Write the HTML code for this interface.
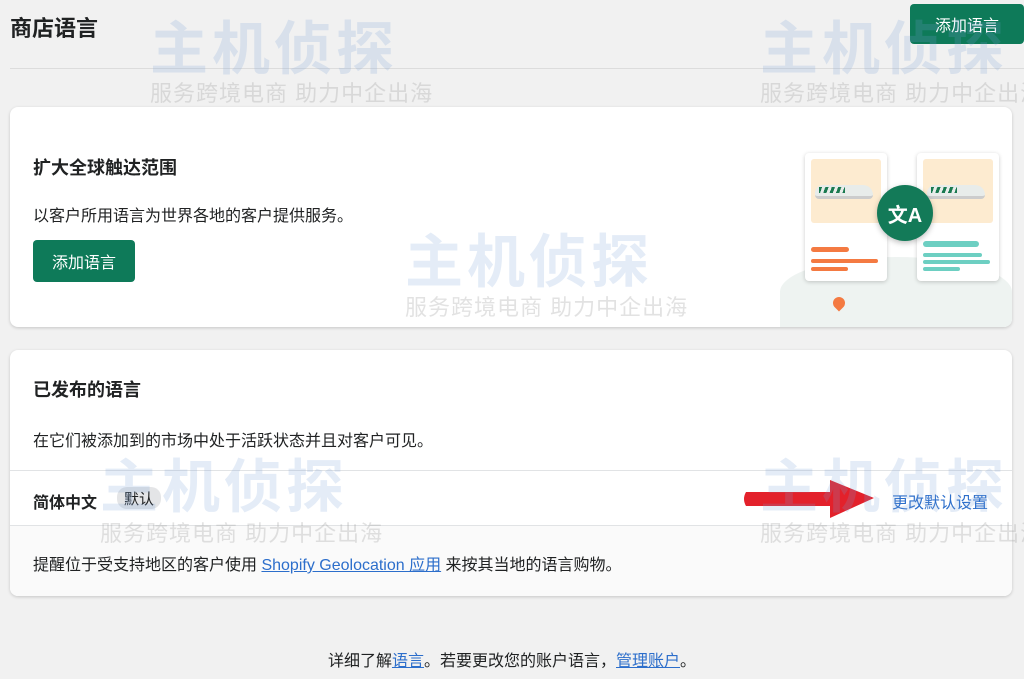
<!DOCTYPE html>
<html><head><meta charset="utf-8"><style>
*{margin:0;padding:0;box-sizing:border-box}
body{width:1024px;height:679px;background:#f1f1f1;font-family:"Liberation Sans","Noto Sans CJK SC",sans-serif;color:#202223;position:relative;overflow:hidden;font-size:16px}
.abs{position:absolute;white-space:nowrap}
.card{position:absolute;left:10px;width:1002px;background:#fff;border-radius:8px;box-shadow:0 1px 3px rgba(0,0,0,.18);overflow:hidden}
.btn{background:#0e7a59;color:#fff;border-radius:4px;font-size:16px;display:flex;align-items:center;justify-content:center}
.wm{position:absolute;white-space:nowrap;color:rgba(120,160,215,.2);font-weight:bold;font-size:58px;letter-spacing:4px;pointer-events:none}
.wm2{position:absolute;white-space:nowrap;color:rgba(150,150,150,.28);font-size:22px;letter-spacing:1px;pointer-events:none}
a{color:#2c6ecb;text-decoration:underline}
</style></head><body>
<div class="abs" style="left:10px;top:11px;font-size:22px;font-weight:bold">商店语言</div>
<div class="abs btn" style="left:910px;top:4px;width:114px;height:40px">添加语言</div>
<div class="abs" style="left:10px;top:68px;width:1014px;height:1px;background:#dcdcdc"></div>

<div class="card" style="top:107px;height:220px">
 <div class="abs" style="left:23px;top:47px;font-size:18px;font-weight:bold">扩大全球触达范围</div>
 <div class="abs" style="left:23px;top:95px">以客户所用语言为世界各地的客户提供服务。</div>
 <div class="abs btn" style="left:23px;top:133px;width:102px;height:42px">添加语言</div>
 <div class="abs" style="left:770px;top:150px;width:232px;height:70px;background:#eef3f1;border-radius:50% 50% 0 0"></div>
 <div class="abs" style="left:795px;top:46px;width:82px;height:128px;background:#fff;border-radius:4px;box-shadow:0 1px 4px rgba(0,0,0,.2)">
  <div class="abs" style="left:6px;top:6px;width:70px;height:64px;background:#fdebd0;border-radius:3px"></div>
  <div class="abs" style="left:10px;top:32px;width:58px;height:14px;background:#e8ecea;border-radius:8px 10px 4px 4px;border-bottom:3px solid #ccc"></div>
  <div class="abs" style="left:14px;top:34px;width:26px;height:6px;background:repeating-linear-gradient(110deg,#1a7a50 0 3px,transparent 3px 6px)"></div>
  <div class="abs" style="left:6px;top:94px;width:38px;height:5px;background:#f47a42;border-radius:3px"></div>
  <div class="abs" style="left:6px;top:106px;width:67px;height:4px;background:#f47a42;border-radius:2px"></div>
  <div class="abs" style="left:6px;top:114px;width:37px;height:4px;background:#f47a42;border-radius:2px"></div>
 </div>
 <div class="abs" style="left:907px;top:46px;width:82px;height:128px;background:#fff;border-radius:4px;box-shadow:0 1px 4px rgba(0,0,0,.2)">
  <div class="abs" style="left:6px;top:6px;width:70px;height:64px;background:#fdebd0;border-radius:3px"></div>
  <div class="abs" style="left:10px;top:32px;width:58px;height:14px;background:#e8ecea;border-radius:8px 10px 4px 4px;border-bottom:3px solid #ccc"></div>
  <div class="abs" style="left:14px;top:34px;width:26px;height:6px;background:repeating-linear-gradient(110deg,#1a7a50 0 3px,transparent 3px 6px)"></div>
  <div class="abs" style="left:6px;top:88px;width:56px;height:6px;background:#6dcfc2;border-radius:3px"></div>
  <div class="abs" style="left:6px;top:100px;width:59px;height:4px;background:#6dcfc2;border-radius:2px"></div>
  <div class="abs" style="left:6px;top:107px;width:67px;height:4px;background:#6dcfc2;border-radius:2px"></div>
  <div class="abs" style="left:6px;top:114px;width:37px;height:4px;background:#6dcfc2;border-radius:2px"></div>
 </div>
 <div class="abs" style="left:867px;top:78px;width:56px;height:56px;border-radius:50%;background:#137a58;color:#fff;font-weight:bold;font-size:20px;display:flex;align-items:center;justify-content:center;box-shadow:0 2px 6px rgba(0,0,0,.25)">文A</div>
 <div class="abs" style="left:823px;top:190px;width:12px;height:12px;background:#f47a42;border-radius:50% 50% 50% 0;transform:rotate(-45deg)"></div>
</div>

<div class="card" style="top:350px;height:246px">
 <div class="abs" style="left:23px;top:26px;font-size:18px;font-weight:bold">已发布的语言</div>
 <div class="abs" style="left:23px;top:77px">在它们被添加到的市场中处于活跃状态并且对客户可见。</div>
 <div class="abs" style="left:0;top:120px;width:1002px;height:1px;background:#e1e3e5"></div>
 <div class="abs" style="left:23px;top:139px;font-weight:bold">简体中文</div>
 <div class="abs" style="left:107px;top:137px;width:44px;height:22px;background:#e4e5e7;border-radius:10px;font-size:15px;display:flex;align-items:center;justify-content:center">默认</div>
 <div class="abs" style="left:882px;top:139px;color:#2c6ecb">更改默认设置</div>
 <div class="abs" style="left:0;top:175px;width:1002px;height:71px;background:#fafafa;border-top:1px solid #e1e3e5"></div>
 <div class="abs" style="left:23px;top:201px">提醒位于受支持地区的客户使用 <a>Shopify Geolocation 应用</a> 来按其当地的语言购物。</div>
</div>
<svg class="abs" style="left:740px;top:476px" width="140" height="46"><path d="M6 16 H90 V4 L134 22 L90 42 V30 H6 Q2 23 6 16 Z" fill="#e3212b"/></svg>
<div class="abs" style="left:0;top:647px;width:1024px;text-align:center">详细了解<a>语言</a>。若要更改您的账户语言，<a>管理账户</a>。</div>

<div class="wm" style="left:150px;top:2px">主机侦探</div><div class="wm2" style="left:150px;top:76px">服务跨境电商 助力中企出海</div>
<div class="wm" style="left:760px;top:2px">主机侦探</div><div class="wm2" style="left:760px;top:76px">服务跨境电商 助力中企出海</div>
<div class="wm" style="left:405px;top:215px">主机侦探</div><div class="wm2" style="left:405px;top:290px">服务跨境电商 助力中企出海</div>
<div class="wm" style="left:100px;top:440px">主机侦探</div><div class="wm2" style="left:100px;top:516px">服务跨境电商 助力中企出海</div>
<div class="wm" style="left:760px;top:440px">主机侦探</div><div class="wm2" style="left:760px;top:516px">服务跨境电商 助力中企出海</div>
</body></html>
